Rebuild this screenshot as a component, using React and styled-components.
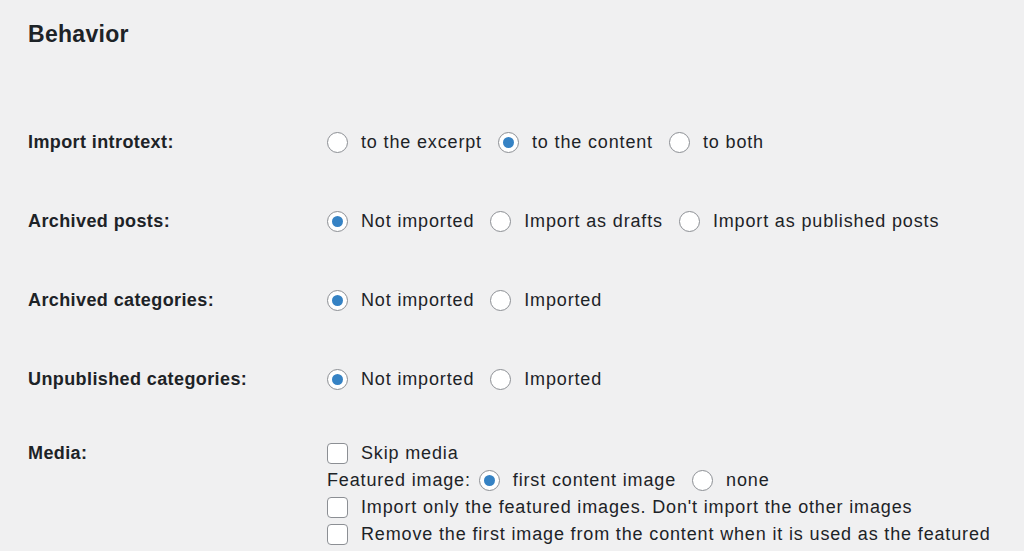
import React from "react";
import styled, { createGlobalStyle } from "styled-components";

const Global = createGlobalStyle`
  body { margin: 0; background: #f0f0f1; font-family: "Liberation Sans", Arial, sans-serif; color: #1d2327; }
`;
const Page = styled.div`padding: 19px 28px 0 28px;`;
const Title = styled.h2`
  margin: 0 0 54px 0; font-size: 23px; line-height: 30px; font-weight: 700; letter-spacing: 0.3px;
`;
const Row = styled.div`
  display: grid; grid-template-columns: 299px 1fr;
  padding: ${p => p.$top ?? 26}px 0 26px 0;
`;
const Label = styled.div`font-size: 18px; line-height: 27px; font-weight: 700; letter-spacing: 0.4px;`;
const Field = styled.div`display: flex; flex-direction: column;`;
const Line = styled.div`display: flex; align-items: center; font-size: 18px; line-height: 27px; white-space: nowrap; letter-spacing: 0.85px;`;
const Option = styled.label`display: flex; align-items: center; margin-right: 16px;`;
const Radio = styled.span`
  width: 21px; height: 21px; box-sizing: border-box; border: 1px solid #8c8f94; border-radius: 50%;
  background: #fff; display: inline-flex; align-items: center; justify-content: center; margin-right: 13px; flex: none;
  &::after { content: ""; width: 11px; height: 11px; border-radius: 50%; background: ${p => p.$on ? "#3582c4" : "transparent"}; }
`;
const Check = styled.span`
  width: 21px; height: 21px; box-sizing: border-box; border: 1px solid #8c8f94; border-radius: 4px;
  background: #fff; display: inline-block; margin-right: 13px; flex: none;
`;
const Prefix = styled.span`margin-right: 8px;`;

const Radios = ({ opts, sel }) => (
  <Line>{opts.map((o, i) => <Option key={o}><Radio $on={i === sel} />{o}</Option>)}</Line>
);

export default function App() {
  return (
    <Page>
      <Global />
      <Title>Behavior</Title>
      <Row><Label>Import introtext:</Label><Field><Radios opts={["to the excerpt", "to the content", "to both"]} sel={1} /></Field></Row>
      <Row><Label>Archived posts:</Label><Field><Radios opts={["Not imported", "Import as drafts", "Import as published posts"]} sel={0} /></Field></Row>
      <Row><Label>Archived categories:</Label><Field><Radios opts={["Not imported", "Imported"]} sel={0} /></Field></Row>
      <Row><Label>Unpublished categories:</Label><Field><Radios opts={["Not imported", "Imported"]} sel={0} /></Field></Row>
      <Row $top={21}><Label>Media:</Label>
        <Field>
          <Line><Check />Skip media</Line>
          <Line><Prefix>Featured image:</Prefix><Option><Radio $on />first content image</Option><Option><Radio />none</Option></Line>
          <Line><Check />Import only the featured images. Don't import the other images</Line>
          <Line><Check />Remove the first image from the content when it is used as the featured</Line>
        </Field>
      </Row>
    </Page>
  );
}
